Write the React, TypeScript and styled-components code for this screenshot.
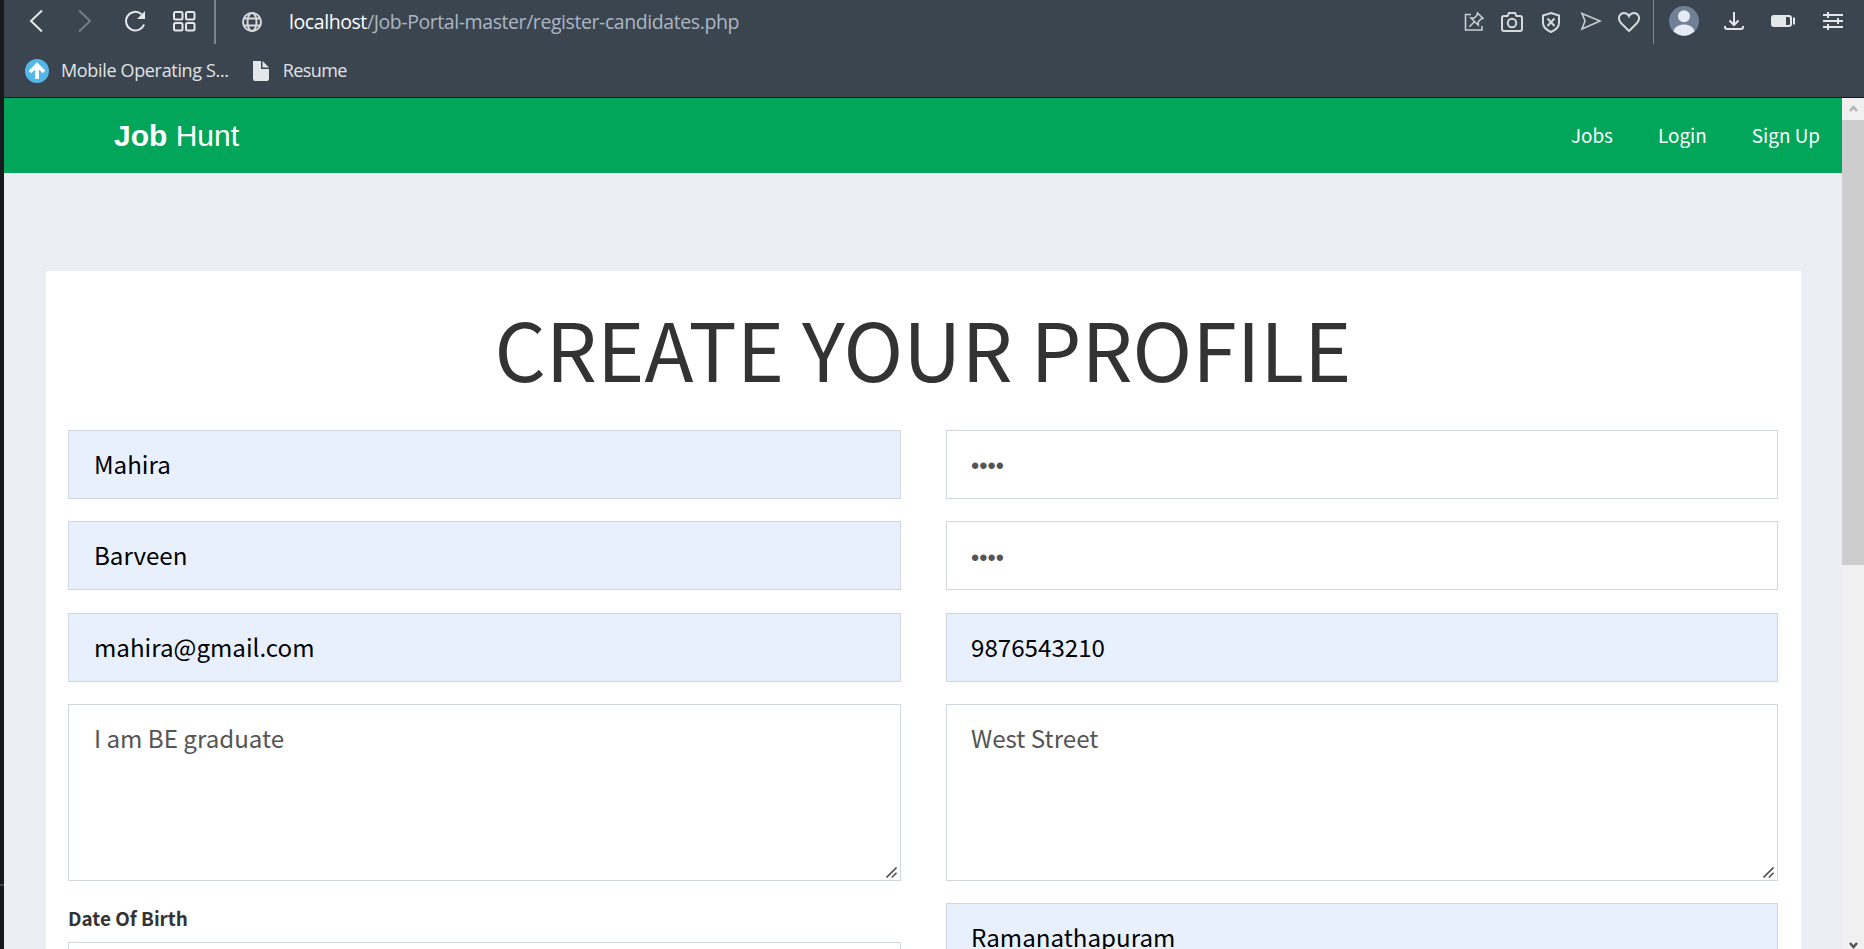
import React from "react";
import styled, { createGlobalStyle } from "styled-components";

const sans = '"Noto Sans CJK SC", "Noto Sans", sans-serif';
const chromeSans = '"Open Sans", "Noto Sans", sans-serif';

const GlobalStyle = createGlobalStyle`
  * { box-sizing: border-box; }
  html, body { margin: 0; height: 949px; overflow: hidden; }
`;

const Screen = styled.div`
  display: flex;
  width: 1864px;
  height: 949px;
  overflow: hidden;
`;

const WindowEdge = styled.div`
  flex: none;
  width: 4px;
  padding-top: 884px;
  background: #17191d;
  &::after {
    content: "";
    display: block;
    height: 2px;
    background: #3b4550;
  }
`;

const BrowserWindow = styled.div`
  flex: 1;
  min-width: 0;
  display: flex;
  flex-direction: column;
`;

const Chrome = styled.header`
  flex: none;
  height: 98px;
  background: #3b4550;
  border-bottom: 1px solid #14171a;
  font-family: ${chromeSans};
`;

const Toolbar = styled.div`
  display: flex;
  height: 44px;
  padding-left: 24px;
`;

const Icon = styled.svg<{ $gap?: number; $color?: string }>`
  flex: none;
  display: block;
  margin-left: ${(p) => p.$gap ?? 0}px;
  color: ${(p) => p.$color ?? "#e4e7ea"};
  fill: none;
  stroke: currentColor;
  stroke-width: 2;
`;

const ThinIcon = styled(Icon)`
  stroke-width: 1.6;
`;

const Divider = styled.span<{ $gap: number; $width: number }>`
  flex: none;
  width: ${(p) => p.$width}px;
  margin-left: ${(p) => p.$gap}px;
  background: #7b858e;
`;

const Address = styled.div`
  flex: 1;
  margin-left: 26px;
  font-size: 19.5px;
  line-height: 44px;
  letter-spacing: -0.42px;
  color: #aab6c3;
  white-space: nowrap;
  b { font-weight: 400; color: #fff; }
`;

const Actions = styled.div`
  display: flex;
  padding-right: 20px;
`;

const Bookmarks = styled.nav`
  display: flex;
  align-items: center;
  height: 53px;
  padding: 0 0 0 21px;
`;

const Bookmark = styled.a<{ $spacing: number }>`
  display: flex;
  align-items: center;
  gap: 12px;
  margin-right: 22px;
  font-size: 18px;
  line-height: 22px;
  letter-spacing: ${(p) => p.$spacing}px;
  color: #e0e3e6;
  white-space: nowrap;
`;

const BookmarkText = styled.span`
  padding-bottom: 2px;
`;

const Viewport = styled.div`
  flex: 1;
  min-height: 0;
  display: flex;
`;

const Page = styled.div`
  flex: 1;
  min-width: 0;
  overflow: hidden;
  background: #ebeff4;
  font-family: ${sans};
`;

const Navbar = styled.nav`
  display: flex;
  align-items: center;
  justify-content: space-between;
  height: 75px;
  padding: 0 22px 0 110px;
  background: #02a65a;
  color: #fff;
`;

const Logo = styled.span`
  font: 30px/75px "Liberation Sans", Arial, sans-serif;
`;

const NavLinks = styled.div`
  display: flex;
  gap: 45px;
  height: 75px;
  font-size: 18.9px;
  line-height: 73px;
`;

const Card = styled.section`
  width: 1755px;
  height: 900px;
  margin: 98px 0 0 42px;
  padding: 0 23px 0 22px;
  background: #fff;
`;

const Title = styled.h1`
  margin: 0;
  height: 159px;
  font-size: 80.5px;
  font-weight: 400;
  line-height: 152px;
  text-align: center;
  color: #333;
  white-space: nowrap;
`;

const Columns = styled.div`
  display: flex;
  gap: 45px;
`;

const Column = styled.div`
  display: flex;
  flex-direction: column;
  flex: none;
  width: 833px;
  &:last-child { width: 832px; }
`;

const Field = styled.div<{ $filled?: boolean; $after?: number }>`
  height: 69px;
  margin-bottom: ${(p) => p.$after ?? 22}px;
  padding-left: 25px;
  border: 1px solid #d2d6de;
  background: ${(p) => (p.$filled ? "#e8f0fe" : "#fff")};
  color: ${(p) => (p.$filled ? "#000" : "#555")};
  font-size: 24.15px;
  line-height: 66px;
  ${Column}:last-child & { padding-left: 24px; }
`;

const Dots = styled.span<{ $line: number }>`
  display: block;
  font: 23.5px/${(p) => p.$line}px "Liberation Sans", Arial, sans-serif;
`;

const TextArea = styled(Field)`
  position: relative;
  height: 177px;
`;

const Grip = styled.svg`
  position: absolute;
  right: 3px;
  bottom: 2px;
  stroke: #555;
  stroke-width: 1.6;
`;

const Label = styled.label`
  height: 39px;
  font-size: 18.9px;
  font-weight: 700;
  line-height: 30px;
  color: #333;
`;

const Scrollbar = styled.div`
  flex: none;
  display: flex;
  flex-direction: column;
  justify-content: space-between;
  width: 22px;
  background: #f0f0f0;
`;

const Thumb = styled.div`
  height: 445px;
  margin-bottom: auto;
  background: #cdcdcd;
`;

const ScrollArrow = styled.svg`
  display: block;
  fill: none;
  stroke-width: 2.6;
`;

function ResizeGrip() {
  return (
    <Grip width="11" height="11" viewBox="0 0 11 11">
      <path d="M.5 10.5 10.5.5M5.8 10.5l4.7-4.7" />
    </Grip>
  );
}

export default function App() {
  return (
    <Screen>
      <GlobalStyle />
      <WindowEdge />
      <BrowserWindow>
        <Chrome>
          <Toolbar>
            <Icon width="16" height="44"><path d="M14 10.5 3 21l11 10.5" /></Icon>
            <Icon width="16" height="44" $gap={31} $color="#717c86"><path d="m4 10.5 11 10.5L4 31.5" /></Icon>
            <Icon width="22" height="44" $gap={33}>
              <path d="M20 24.5A9.300 9.300 0 1 1 17.500 14.200" />
              <path d="M21 11v8h-8z" fill="currentColor" stroke="none" />
            </Icon>
            <Icon width="24" height="44" $gap={26}>
              <rect x="2" y="12" width="8.500" height="7.500" rx="1.500" />
              <rect x="14" y="12" width="8.500" height="7.500" rx="1.500" />
              <rect x="2" y="23" width="8.500" height="7.500" rx="1.500" />
              <rect x="14" y="23" width="8.500" height="7.500" rx="1.500" />
            </Icon>
            <Divider $gap={18} $width={2} />
            <Icon width="22" height="44" $gap={25} $color="#d5d9dc">
              <circle cx="11" cy="22" r="9" />
              <ellipse cx="11" cy="22" rx="4.500" ry="9" />
              <path d="M3 18.500h16M3 25.500h16" />
            </Icon>
            <Address><b>localhost</b>/Job-Portal-master/register-candidates.php</Address>
            <Actions>
              <ThinIcon width="20" height="44" $color="#c9ced2">
                <path d="M7 14.500H1.500V30H18v-4" />
                <path d="m13.500 13 5.500 5.500-2.200.6-2.500 2.600v3.500l-7.300-7.200h3.300l2.600-2.600zM10.400 21.800l-5 5" />
              </ThinIcon>
              <Icon width="24" height="44" $gap={16} $color="#d5d9dc">
                <path d="M4 16h3.500l1.500-3h6l1.500 3H20q2 0 2 2v11q0 2-2 2H4q-2 0-2-2V18q0-2 2-2z" />
                <circle cx="12" cy="23" r="4.200" />
              </Icon>
              <Icon width="20" height="44" $gap={17} $color="#d5d9dc">
                <path d="m10 13 8 2.500V23q0 5.500-8 9-8-3.500-8-9v-7.500z" />
                <path d="m6.500 18.500 7 7.500m0-7.500-7 7.500" />
              </Icon>
              <ThinIcon width="22" height="44" $gap={19} $color="#c9ced2">
                <path d="M2 13.500 20 21 2 29l3-8z" />
              </ThinIcon>
              <Icon width="24" height="44" $gap={15} $color="#d5d9dc">
                <path d="M12 31 4.200 23.300C-.5 18 3 13 7 13q3.500 0 5 3.200Q13.500 13 17 13c4 0 7.500 5 2.800 10.300z" />
              </Icon>
              <Divider $gap={12} $width={1} />
              <Icon width="30" height="44" $gap={15}>
                <circle cx="15" cy="21" r="15" fill="#718096" stroke="none" />
                <circle cx="15" cy="16.300" r="6" fill="#e5ebf3" stroke="none" />
                <path d="M4.500 31.500C6 22 24 22 25.500 31.500Q15 40 4.500 31.500z" fill="#e5ebf3" stroke="none" />
              </Icon>
              <Icon width="22" height="44" $gap={24}>
                <path d="M11 12v13M6.500 20.500 11 25l4.500-4.500M2 26v1q0 2 2 2h14q2 0 2-2v-1" />
              </Icon>
              <Icon width="26" height="44" $gap={25}>
                <rect x="1" y="15" width="21" height="12" rx="3" fill="currentColor" stroke="none" />
                <path d="M16 17h2.500q1.500 0 1.500 1.500v5q0 1.500-1.500 1.500H16z" fill="#3b4550" stroke="none" />
                <path d="M24 17.500v7" />
              </Icon>
              <Icon width="22" height="44" $gap={26}>
                <path d="M1 15h20M1 21h20M1 27h20M6 12v6M16 18v6M6 24v6" />
              </Icon>
            </Actions>
          </Toolbar>
          <Bookmarks>
            <Bookmark $spacing={-0.34}>
              <svg width="24" height="24">
                <circle cx="12" cy="12" r="12" fill="#53b7ea" />
                <path d="M12 20V6M5 13l7-7 7 7" fill="none" stroke="#fff" strokeWidth="3.800" />
              </svg>
              <BookmarkText>Mobile Operating S...</BookmarkText>
            </Bookmark>
            <Bookmark $spacing={-0.6}>
              <svg width="20" height="24">
                <path d="M2 2h8v8h8v10q0 2-2 2H4q-2 0-2-2z" fill="#e4e7ea" />
                <path d="m11.500 2 6.500 6.500h-6.500z" fill="#e4e7ea" />
              </svg>
              <BookmarkText>Resume</BookmarkText>
            </Bookmark>
          </Bookmarks>
        </Chrome>
        <Viewport>
          <Page>
            <Navbar>
              <Logo><b>Job</b> Hunt</Logo>
              <NavLinks>
                <span>Jobs</span>
                <span>Login</span>
                <span>Sign Up</span>
              </NavLinks>
            </Navbar>
            <Card>
              <Title>CREATE YOUR PROFILE</Title>
              <Columns>
                <Column>
                  <Field $filled>Mahira</Field>
                  <Field $filled $after={23}>Barveen</Field>
                  <Field $filled>mahira@gmail.com</Field>
                  <TextArea>I am BE graduate<ResizeGrip /></TextArea>
                  <Label>Date Of Birth</Label>
                  <Field />
                </Column>
                <Column>
                  <Field><Dots $line={70}>••••</Dots></Field>
                  <Field $after={23}><Dots $line={72}>••••</Dots></Field>
                  <Field $filled>9876543210</Field>
                  <TextArea>West Street<ResizeGrip /></TextArea>
                  <Field $filled>Ramanathapuram</Field>
                </Column>
              </Columns>
            </Card>
          </Page>
          <Scrollbar>
            <ScrollArrow width="22" height="22" stroke="#b5b5b5"><path d="m8 13 3.500-4 3.500 4" /></ScrollArrow>
            <Thumb />
            <ScrollArrow width="22" height="12" stroke="#555"><path d="m8 6 3.500 4L15 6" /></ScrollArrow>
          </Scrollbar>
        </Viewport>
      </BrowserWindow>
    </Screen>
  );
}
